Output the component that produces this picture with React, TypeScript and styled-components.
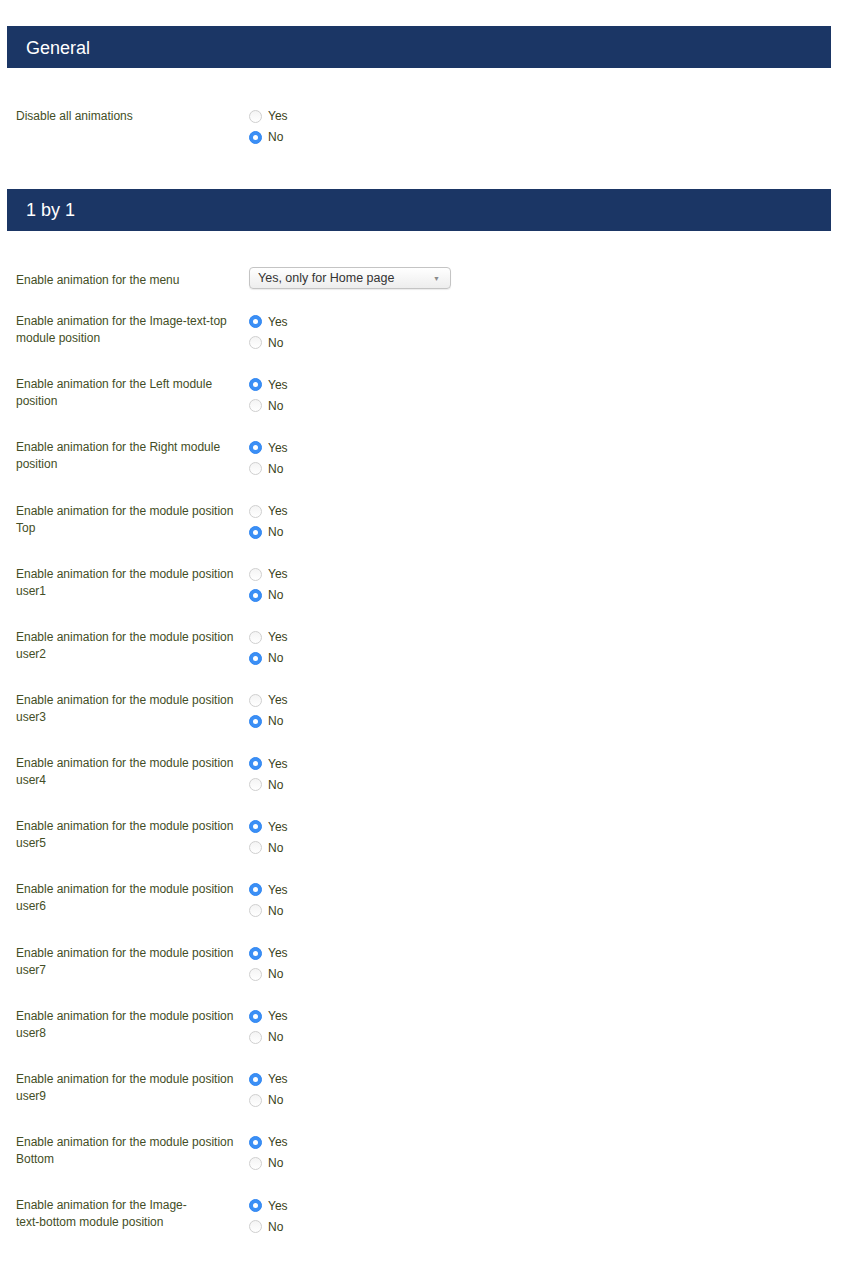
import * as React from 'react';
import styled, { createGlobalStyle } from 'styled-components';

type Choice = 'yes' | 'no';

interface Field {
  label: React.ReactNode;
  key: string;
  value: Choice;
}

const positions: Field[] = [
  { key: 'itt', label: 'Enable animation for the Image-text-top module position', value: 'yes' },
  { key: 'left', label: 'Enable animation for the Left module position', value: 'yes' },
  { key: 'right', label: 'Enable animation for the Right module position', value: 'yes' },
  { key: 'top', label: 'Enable animation for the module position Top', value: 'no' },
  { key: 'u1', label: 'Enable animation for the module position user1', value: 'no' },
  { key: 'u2', label: 'Enable animation for the module position user2', value: 'no' },
  { key: 'u3', label: 'Enable animation for the module position user3', value: 'no' },
  { key: 'u4', label: 'Enable animation for the module position user4', value: 'yes' },
  { key: 'u5', label: 'Enable animation for the module position user5', value: 'yes' },
  { key: 'u6', label: 'Enable animation for the module position user6', value: 'yes' },
  { key: 'u7', label: 'Enable animation for the module position user7', value: 'yes' },
  { key: 'u8', label: 'Enable animation for the module position user8', value: 'yes' },
  { key: 'u9', label: 'Enable animation for the module position user9', value: 'yes' },
  { key: 'bottom', label: 'Enable animation for the module position Bottom', value: 'yes' },
  {
    key: 'itb',
    label: <>Enable animation for the Image-<NoWrap>text-bottom</NoWrap> module position</>,
    value: 'yes',
  },
];

const RadioGroup = ({ value }: { value: Choice }) => (
  <Options>
    <Option>
      <Radio $checked={value === 'yes'} />
      Yes
    </Option>
    <Option>
      <Radio $checked={value === 'no'} />
      No
    </Option>
  </Options>
);

export default function App() {
  return (
    <>
      <GlobalStyle />
      <Page>
        <Section>
          <SectionTitle>General</SectionTitle>
          <SectionBody>
            <Row>
              <Label>Disable all animations</Label>
              <RadioGroup value='no' />
            </Row>
          </SectionBody>
        </Section>
        <Section>
          <SectionTitle>1 by 1</SectionTitle>
          <SectionBody>
            <Row $extra={1}>
              <Label $offset={4}>Enable animation for the menu</Label>
              <Select>
                Yes, only for Home page
                <Caret>▼</Caret>
              </Select>
            </Row>
            {positions.map((field) => (
              <Row key={field.key}>
                <Label>{field.label}</Label>
                <RadioGroup value={field.value} />
              </Row>
            ))}
          </SectionBody>
        </Section>
      </Page>
    </>
  );
}

function NoWrap({ children }: { children: React.ReactNode }) {
  return <Keep>{children}</Keep>;
}

const GlobalStyle = createGlobalStyle`
  body {
    margin: 0;
    background: #fff;
    font-family: "Liberation Sans", Arial, Helvetica, sans-serif;
  }
`;

const Page = styled.div`
  width: 824px;
  padding: 26px 0 0 7px;
`;

const Section = styled.section`
  display: flex;
  flex-direction: column;
`;

const SectionTitle = styled.h2`
  margin: 0;
  height: 42px;
  box-sizing: border-box;
  padding: 2px 0 0 19px;
  display: flex;
  align-items: center;
  background: #1b3665;
  color: #fff;
  font-size: 18px;
  font-weight: 400;
`;

const SectionBody = styled.div`
  display: flex;
  flex-direction: column;
  gap: 21.15px;
  padding: 37.5px 0 41px 9px;
`;

const Row = styled.div<{ $extra?: number }>`
  display: flex;
  align-items: flex-start;
  margin-bottom: ${(p) => p.$extra ?? 0}px;
`;

const Label = styled.div<{ $offset?: number }>`
  width: 224px;
  padding-top: ${(p) => p.$offset ?? 2}px;
  padding-right: 9px;
  box-sizing: content-box;
  font-size: 12px;
  line-height: 17px;
  color: #434e26;
`;

const Keep = styled.span`
  white-space: nowrap;
`;

const Options = styled.div`
  display: flex;
  flex-direction: column;
`;

const Option = styled.label`
  display: flex;
  align-items: center;
  gap: 6px;
  height: 21px;
  font-size: 12px;
  color: #3a4220;
`;

const Radio = styled.span<{ $checked: boolean }>`
  width: 13px;
  height: 13px;
  box-sizing: border-box;
  border-radius: 50%;
  position: relative;
  border: 1px solid ${(p) => (p.$checked ? '#2f86f2' : '#cfcfcf')};
  background: ${(p) => (p.$checked ? '#3b8ff5' : 'linear-gradient(#f4f4f4, #fff)')};
  &::after {
    content: '';
    display: ${(p) => (p.$checked ? 'block' : 'none')};
    position: absolute;
    left: 50%;
    top: 50%;
    width: 5px;
    height: 5px;
    margin: -2.5px 0 0 -2.5px;
    border-radius: 50%;
    background: #fff;
  }
`;

const Select = styled.div`
  width: 202px;
  height: 22px;
  box-sizing: border-box;
  margin-top: -1px;
  padding: 0 8px;
  display: flex;
  align-items: center;
  justify-content: space-between;
  border: 1px solid #c4c4c4;
  border-radius: 4px;
  background: linear-gradient(#fff, #ededed);
  box-shadow: 0 1px 1px rgba(0, 0, 0, 0.08);
  font-size: 12.5px;
  color: #333;
`;

const Caret = styled.span`
  font-size: 7px;
  color: #8a8a8a;
  padding-right: 2px;
`;
